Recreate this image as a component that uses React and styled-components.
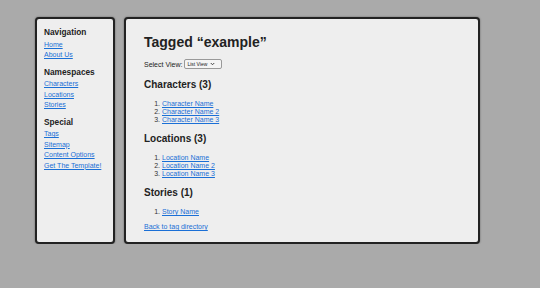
import React from 'react'
import styled, { createGlobalStyle } from 'styled-components'

const Global = createGlobalStyle`
  html, body {
    margin: 0;
    padding: 0;
    background: #aaaaaa;
    font-family: "Liberation Sans", Arial, sans-serif;
    color: #222;
  }
`

const Page = styled.div`
  display: flex;
  align-items: stretch;
  gap: 9px;
  padding: 17px 0 0 35px;
`

const Panel = styled.div`
  background: #eeeeee;
  border: 2px solid #222;
  border-radius: 4px;
  box-shadow: 0 0 2px rgba(0, 0, 0, 0.45);
`

const Sidebar = styled(Panel)`
  width: 62px;
  padding: 8px 7px;
`

const Main = styled(Panel)`
  width: 316px;
  padding: 15px 18px 12px 18px;
`

const NavTitle = styled.h3`
  font-size: 8.3px;
  font-weight: bold;
  margin: ${p => (p.$first ? '0' : '6px')} 0 2.5px;
  line-height: 10px;
`

const NavLink = styled.a`
  display: block;
  font-size: 7px;
  line-height: 10.5px;
  color: #1a6fd6;
  text-decoration: underline;
  white-space: nowrap;
`

const Title = styled.h1`
  font-size: 14px;
  font-weight: bold;
  line-height: 16px;
  margin: 0 0 9px;
`

const SelectRow = styled.div`
  display: flex;
  align-items: center;
  gap: 2px;
  font-size: 7px;
  padding-bottom: 1px;
`

const SelectWrap = styled.span`
  position: relative;
  display: inline-flex;
`

const Select = styled.select`
  appearance: none;
  font-family: inherit;
  font-size: 5px;
  height: 10px;
  width: 38px;
  padding: 0 0 0 2px;
  border: 1px solid #999;
  border-radius: 2px;
  background: #f4f4f4;
  color: #222;
`

const Chevron = styled.svg`
  position: absolute;
  right: 7px;
  top: 3px;
  width: 5px;
  height: 4px;
  pointer-events: none;
`

const Heading = styled.h2`
  font-size: 10px;
  font-weight: bold;
  line-height: 12px;
  margin: 9px 0 9px;
`

const List = styled.ol`
  margin: 0;
  padding-left: 18px;
  font-size: 7px;
  line-height: 8px;
`

const Item = styled.li`
  color: #333;
`

const Link = styled.a`
  color: #1a6fd6;
  text-decoration: underline;
`

const Back = styled(Link)`
  display: block;
  font-size: 7px;
  margin-top: 7px;
`

const sections = [
  { title: 'Characters (3)', items: ['Character Name', 'Character Name 2', 'Character Name 3'] },
  { title: 'Locations (3)', items: ['Location Name', 'Location Name 2', 'Location Name 3'] },
  { title: 'Stories (1)', items: ['Story Name'] },
]

const nav = [
  { title: 'Navigation', links: ['Home', 'About Us'] },
  { title: 'Namespaces', links: ['Characters', 'Locations', 'Stories'] },
  { title: 'Special', links: ['Tags', 'Sitemap', 'Content Options', 'Get The Template!'] },
]

export default function App() {
  return (
    <>
      <Global />
      <Page>
        <Sidebar>
          {nav.map((g, i) => (
            <div key={g.title}>
              <NavTitle $first={i === 0}>{g.title}</NavTitle>
              {g.links.map(l => <NavLink key={l} href="#">{l}</NavLink>)}
            </div>
          ))}
        </Sidebar>
        <Main>
          <Title>Tagged “example”</Title>
          <SelectRow>
            Select View:
            <SelectWrap>
              <Select defaultValue="list">
                <option value="list">List View</option>
              </Select>
              <Chevron viewBox="0 0 10 8">
                <path d="M1.5 2 L5 5.5 L8.5 2" fill="none" stroke="#333" strokeWidth="1.8" />
              </Chevron>
            </SelectWrap>
          </SelectRow>
          {sections.map(s => (
            <div key={s.title}>
              <Heading>{s.title}</Heading>
              <List>
                {s.items.map(it => (
                  <Item key={it}><Link href="#">{it}</Link></Item>
                ))}
              </List>
            </div>
          ))}
          <Back href="#">Back to tag directory</Back>
        </Main>
      </Page>
    </>
  )
}
